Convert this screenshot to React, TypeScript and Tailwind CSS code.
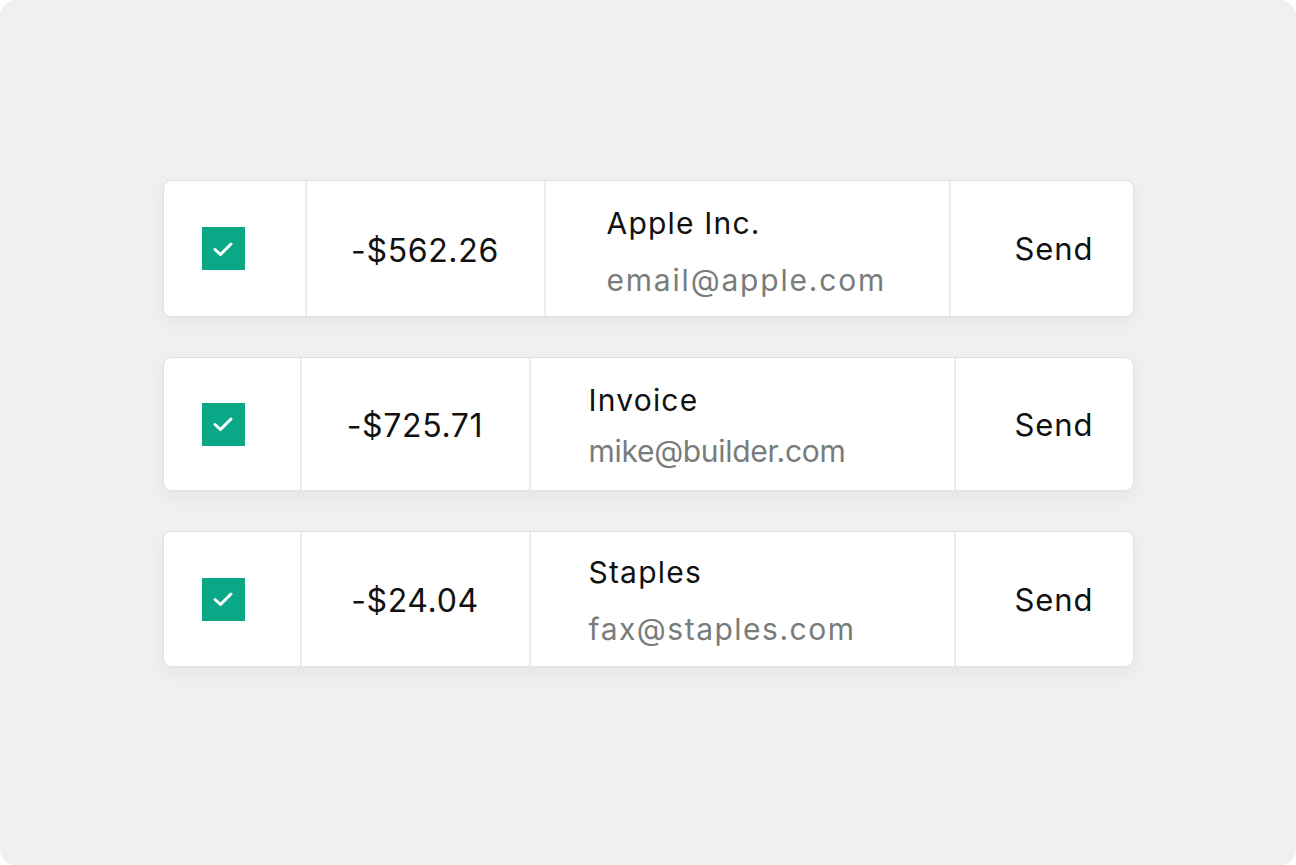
type Row = {
  amount: string;
  name: string;
  email: string;
  cols: [string, string, string];
  namePad: string;
  emailClass: string;
  height: string;
};

const rows: Row[] = [
  {
    amount: "-$562.26",
    name: "Apple Inc.",
    email: "email@apple.com",
    cols: ["w-[143px]", "w-[239px]", "w-[405px]"],
    namePad: "pl-[61px] pt-[6px]",
    emailClass: "mt-[17px] tracking-[0.06em]",
    height: "h-[137px]",
  },
  {
    amount: "-$725.71",
    name: "Invoice",
    email: "mike@builder.com",
    cols: ["w-[138px]", "w-[229px]", "w-[425px]"],
    namePad: "pl-[58px] pt-[2px]",
    emailClass: "mt-[11px] tracking-[-0.01em]",
    height: "h-[134px]",
  },
  {
    amount: "-$24.04",
    name: "Staples",
    email: "fax@staples.com",
    cols: ["w-[138px]", "w-[229px]", "w-[425px]"],
    namePad: "pl-[58px] pt-[2px]",
    emailClass: "mt-[17px] tracking-[0.05em]",
    height: "h-[136px]",
  },
];

function Check() {
  return (
    <div className="w-[43px] h-[43px] bg-[#0aa886] flex items-center justify-center">
      <svg width="22" height="18" viewBox="0 0 22 18" fill="none">
        <path d="M3 9.5 L8.5 14.5 L19 4" stroke="white" strokeWidth="3" strokeLinecap="round" strokeLinejoin="round" />
      </svg>
    </div>
  );
}

export default function App() {
  return (
    <div className="w-[1296px] h-[865px] bg-white">
      <div
        className="w-full h-full bg-[#eef1f0] rounded-[16px] flex flex-col items-center pt-[180px] gap-[40px] text-[#111]"
        style={{ fontFamily: "Inter, 'Liberation Sans', sans-serif" }}
      >
        {rows.map((r) => (
          <div
            key={r.name}
            className={`w-[971px] ${r.height} bg-white rounded-[8px] border border-[#dde1df] shadow-[0_6px_18px_rgba(0,0,0,0.05)] flex`}
          >
            <div className={`${r.cols[0]} flex items-center pl-[38px] border-r-2 border-[#eceeed]`}>
              <Check />
            </div>
            <div className={`${r.cols[1]} flex items-center justify-center pt-[4px] border-r-2 border-[#eceeed] text-[32px] tracking-[0.02em]`}>
              {r.amount}
            </div>
            <div className={`${r.cols[2]} flex flex-col justify-center ${r.namePad} border-r-2 border-[#eceeed]`}>
              <div className="text-[30px] leading-[40px] tracking-[0.04em]">{r.name}</div>
              <div className={`text-[30px] leading-[40px] text-[#787c7b] ${r.emailClass}`}>{r.email}</div>
            </div>
            <div className="flex-1 flex items-center justify-end pr-[39px] pt-[2px] text-[31px] tracking-[0.03em]">
              Send
            </div>
          </div>
        ))}
      </div>
    </div>
  );
}
